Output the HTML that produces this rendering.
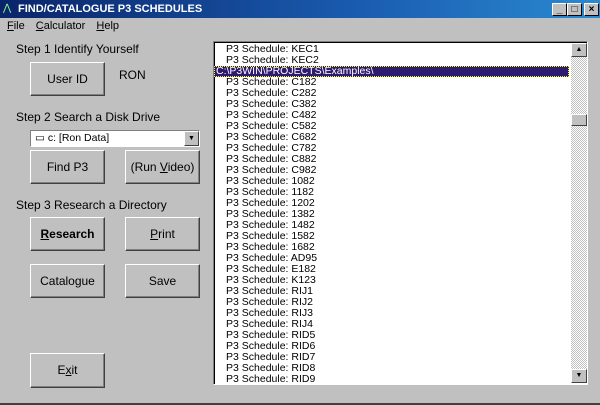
<!DOCTYPE html><html><head><style>
*{margin:0;padding:0;box-sizing:border-box}
body{width:600px;height:405px;background:#c0c0c0;font-family:"Liberation Sans",sans-serif;font-size:11px;color:#000;position:relative;overflow:hidden}
.a{position:absolute}
.title{left:0;top:0;width:600px;height:18px;background:linear-gradient(90deg,#0a246a,#1a5cb0 60%,#2a8ad0);color:#fff;font-weight:bold;font-size:11px;line-height:18px;padding-left:18px}
.cb{top:3px;width:15px;height:13px;background:#c0c0c0;border:1px solid;border-color:#fff #000 #000 #fff;font-size:10px;line-height:11px;text-align:center;font-weight:bold;color:#000}
.btn{background:#c0c0c0;border:1px solid;border-color:#fff #404040 #404040 #fff;box-shadow:inset -1px -1px #808080;text-align:center;font-size:12px}
.lab{font-size:12px}
.list{left:213px;top:41px;width:375px;height:344px;background:#fff;border:1px solid;border-color:#808080 #fff #fff #808080;box-shadow:inset 1px 1px #000}
.row{height:11px;line-height:11px;font-size:10.5px;padding-left:12px;white-space:nowrap}
.sb{left:571px;top:43px;width:16px;height:340px;background:repeating-conic-gradient(#fff 0 25%,#c0c0c0 0 50%) 0 0/2px 2px}
.sbb{left:0;width:16px;height:14px;background:#c0c0c0;border:1px solid;border-color:#fff #404040 #404040 #fff;font-size:7px;text-align:center;line-height:12px}
</style></head><body>
<div class="a title">FIND/CATALOGUE P3 SCHEDULES</div>
<div class="a" style="left:3px;top:3px;width:12px;height:12px;color:#8f8;font-size:10px">⋀</div>
<div class="a cb" style="left:552px">_</div>
<div class="a cb" style="left:567px">□</div>
<div class="a cb" style="left:584px">×</div>
<div class="a" style="left:7px;top:20px;font-size:11px;word-spacing:8px"><u>F</u>ile <u>C</u>alculator <u>H</u>elp</div>
<div class="a lab" style="left:16px;top:42px">Step 1 Identify Yourself</div>
<div class="a btn" style="left:30px;top:62px;width:75px;height:34px;line-height:32px">User ID</div>
<div class="a lab" style="left:119px;top:68px">RON</div>
<div class="a lab" style="left:16px;top:110px">Step 2 Search a Disk Drive</div>
<div class="a" style="left:30px;top:130px;width:170px;height:17px;background:#fff;border:1px solid;border-color:#808080 #fff #fff #808080;font-size:10.5px;line-height:15px;padding-left:4px">▭ c: [Ron Data]<div class="a" style="right:0;top:0;width:15px;height:15px;background:#c0c0c0;border:1px solid;border-color:#fff #404040 #404040 #fff;font-size:7px;text-align:center;line-height:13px">▼</div></div>
<div class="a btn" style="left:30px;top:150px;width:75px;height:34px;line-height:32px">Find P3</div>
<div class="a btn" style="left:125px;top:150px;width:75px;height:34px;line-height:32px">(Run <u>V</u>ideo)</div>
<div class="a lab" style="left:16px;top:198px">Step 3 Research a Directory</div>
<div class="a btn" style="left:30px;top:217px;width:75px;height:34px;line-height:32px;font-weight:bold"><u>R</u>esearch</div>
<div class="a btn" style="left:125px;top:217px;width:75px;height:34px;line-height:32px"><u>P</u>rint</div>
<div class="a btn" style="left:30px;top:264px;width:75px;height:34px;line-height:32px">Catalogue</div>
<div class="a btn" style="left:125px;top:264px;width:75px;height:34px;line-height:32px">Save</div>
<div class="a btn" style="left:30px;top:353px;width:75px;height:35px;line-height:33px">E<u>x</u>it</div>
<div class="a list"><div style="padding-top:2px">
<div class="row">P3 Schedule: KEC1</div><div class="row">P3 Schedule: KEC2</div>
<div class="row" style="background:#2e1a6e;color:#fff;padding-left:2px;width:355px;outline:1px dotted #ff0;outline-offset:-1px">C:\P3WIN\PROJECTS\Examples\</div>
<div class="row">P3 Schedule: C182</div><div class="row">P3 Schedule: C282</div><div class="row">P3 Schedule: C382</div><div class="row">P3 Schedule: C482</div><div class="row">P3 Schedule: C582</div><div class="row">P3 Schedule: C682</div><div class="row">P3 Schedule: C782</div><div class="row">P3 Schedule: C882</div><div class="row">P3 Schedule: C982</div><div class="row">P3 Schedule: 1082</div><div class="row">P3 Schedule: 1182</div><div class="row">P3 Schedule: 1202</div><div class="row">P3 Schedule: 1382</div><div class="row">P3 Schedule: 1482</div><div class="row">P3 Schedule: 1582</div><div class="row">P3 Schedule: 1682</div><div class="row">P3 Schedule: AD95</div><div class="row">P3 Schedule: E182</div><div class="row">P3 Schedule: K123</div><div class="row">P3 Schedule: RIJ1</div><div class="row">P3 Schedule: RIJ2</div><div class="row">P3 Schedule: RIJ3</div><div class="row">P3 Schedule: RIJ4</div><div class="row">P3 Schedule: RID5</div><div class="row">P3 Schedule: RID6</div><div class="row">P3 Schedule: RID7</div><div class="row">P3 Schedule: RID8</div><div class="row">P3 Schedule: RID9</div>
</div></div>
<div class="a sb"><div class="a sbb" style="top:0">▲</div><div class="a sbb" style="top:71px;height:12px"></div><div class="a sbb" style="bottom:0">▼</div></div>
<div class="a" style="left:0;top:403px;width:600px;height:2px;background:#404040"></div>
</body></html>
